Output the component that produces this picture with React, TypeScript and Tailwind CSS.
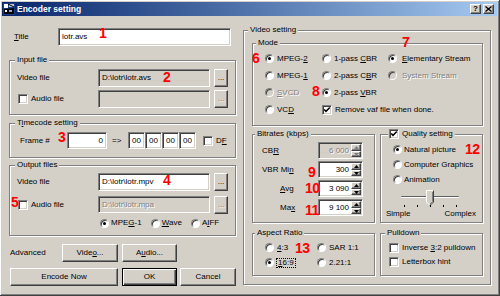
import React from "react";

const sunken =
  "border border-t-[#808080] border-l-[#808080] border-r-white border-b-white shadow-[inset_1px_1px_0_#404040,inset_-1px_-1px_0_#d4d0c8]";
const raised =
  "border border-t-white border-l-white border-r-[#404040] border-b-[#404040] shadow-[inset_-1px_-1px_0_#808080]";
const dis = "text-[#808080] [text-shadow:1px_1px_0_#fff]";

function U({ c }: { c: string }) {
  return <span className="underline decoration-1 underline-offset-[1px]">{c}</span>;
}

function Group({
  label,
  className = "",
  labelClass = "left-[5px]",
  children,
}: {
  label: React.ReactNode;
  className?: string;
  labelClass?: string;
  children?: React.ReactNode;
}) {
  return (
    <div
      className={`relative shrink-0 border border-[#808080] shadow-[inset_1px_1px_0_#fff,1px_1px_0_#fff] ${className}`}
    >
      <div
        className={`absolute -top-[6px] ${labelClass} px-[2px] bg-[#d4d0c8] leading-[10px] whitespace-nowrap`}
      >
        {label}
      </div>
      {children}
    </div>
  );
}

function Radio({ checked = false, disabled = false }: { checked?: boolean; disabled?: boolean }) {
  return (
    <span
      className={`relative inline-block shrink-0 w-[9px] h-[9px] rounded-full border border-t-[#808080] border-l-[#808080] border-r-white border-b-white shadow-[inset_1px_1px_0_#404040] ${
        disabled ? "bg-[#d4d0c8]" : "bg-white"
      }`}
    >
      {checked && (
        <span className="absolute left-[2px] top-[2px] w-[3px] h-[3px] rounded-full bg-black" />
      )}
    </span>
  );
}

function Check({ checked = false }: { checked?: boolean }) {
  return (
    <span className={`relative inline-block shrink-0 w-[10px] h-[10px] bg-white ${sunken}`}>
      {checked && (
        <svg className="absolute left-0 top-0" width="8" height="8" viewBox="0 0 8 8">
          <path d="M1.2 3.4 L3 5.3 L6.8 1.5" stroke="black" strokeWidth="1.5" fill="none" />
        </svg>
      )}
    </span>
  );
}

function Btn({
  children,
  className = "",
  def = false,
}: {
  children: React.ReactNode;
  className?: string;
  def?: boolean;
}) {
  return (
    <div
      className={`shrink-0 flex items-center justify-center h-[18px] ${
        def
          ? "border border-black shadow-[inset_1px_1px_0_#fff,inset_-1px_-1px_0_#404040,inset_-2px_-2px_0_#808080]"
          : raised
      } ${className}`}
    >
      {children}
    </div>
  );
}

function Field({
  children,
  className = "",
}: {
  children?: React.ReactNode;
  className?: string;
}) {
  return (
    <div className={`shrink-0 flex items-center pl-[3px] whitespace-nowrap ${sunken} ${className}`}>
      {children}
    </div>
  );
}

function Arrow({ up, color }: { up: boolean; color: string }) {
  return (
    <svg width="5" height="3" viewBox="0 0 5 3">
      <path d={up ? "M2.5 0 L5 3 L0 3Z" : "M0 0 L5 0 L2.5 3Z"} fill={color} />
    </svg>
  );
}

function Spin({ value, disabled = false }: { value: string; disabled?: boolean }) {
  const c = disabled ? "#808080" : "black";
  return (
    <div className={`shrink-0 flex w-[45px] h-[17px] ${sunken} ${disabled ? "bg-[#d4d0c8]" : "bg-white"}`}>
      <div className={`flex-1 text-right pr-[2px] leading-[15px] ${disabled ? dis : ""}`}>{value}</div>
      <div className="flex flex-col w-[10px] mt-[1px] mb-[1px] mr-[1px]">
        <div className={`h-[7px] bg-[#d4d0c8] flex items-center justify-center ${raised}`}>
          <Arrow up color={c} />
        </div>
        <div className={`h-[6px] bg-[#d4d0c8] flex items-center justify-center ${raised}`}>
          <Arrow up={false} color={c} />
        </div>
      </div>
    </div>
  );
}

function Opt({
  checked = false,
  disabled = false,
  children,
  gap = "ml-[3px]",
}: {
  checked?: boolean;
  disabled?: boolean;
  children: React.ReactNode;
  gap?: string;
}) {
  return (
    <div className="flex items-center whitespace-nowrap">
      <Radio checked={checked} disabled={disabled} />
      <span className={`${gap} ${disabled ? dis : ""}`}>{children}</span>
    </div>
  );
}

function TitleIcon() {
  return (
    <svg width="12" height="12" viewBox="0 0 12 12" className="ml-[1px] shrink-0">
      <rect x="0" y="0" width="12" height="12" fill="#1c3c8c" />
      <rect x="1" y="1" width="4" height="4" fill="#ffffff" />
      <rect x="6" y="1" width="5" height="3" fill="#c8c8c8" />
      <path d="M1 6 L11 5 L11 11 L1 11Z" fill="#000" />
      <rect x="2" y="7" width="2" height="2" fill="#fff" />
      <rect x="6" y="7" width="3" height="2" fill="#8fa8e0" />
      <path d="M5 1 L11 4" stroke="#000" strokeWidth="1" />
    </svg>
  );
}

function TBtn({ children }: { children: React.ReactNode }) {
  return (
    <div
      className={`w-[11px] h-[10px] bg-[#d4d0c8] flex items-center justify-center text-[8px] font-bold leading-none ${raised}`}
    >
      {children}
    </div>
  );
}

function Slider() {
  return (
    <svg width="90" height="21" viewBox="0 0 90 21" className="ml-[9px] block">
      <rect x="11" y="9" width="58" height="1" fill="#808080" />
      <rect x="11" y="10" width="58" height="1" fill="#ffffff" />
      <rect x="12" y="9.5" width="56" height="0.5" fill="#404040" />
      <path d="M36 3 H44 V15 L40 19 L36 15 Z" fill="#d4d0c8" />
      <path d="M36.5 15 V3.5 H43.5" stroke="#fff" strokeWidth="1" fill="none" />
      <path d="M43.5 3.5 V15 L40 18.5" stroke="#404040" strokeWidth="1" fill="none" />
      <path d="M36.5 15 L39.5 18" stroke="#fff" strokeWidth="1" fill="none" />
      <path d="M42.5 5 V14.6 L40 17" stroke="#808080" strokeWidth="1" fill="none" />
      {[14, 27, 40, 53, 66].map((x) => (
        <rect key={x} x={x} y="18" width="1" height="2" fill="#000" />
      ))}
    </svg>
  );
}

function Marks() {
  const m: [string, number, number][] = [
    ["1", 99, 26],
    ["2", 163, 70],
    ["3", 58, 130],
    ["4", 163, 173],
    ["5", 11, 195],
    ["6", 252, 51],
    ["7", 402, 35],
    ["8", 312, 84],
    ["9", 308, 165],
    ["10", 305, 181],
    ["11", 305, 203],
    ["12", 465, 142],
    ["13", 295, 241],
  ];
  return (
    <>
      {m.map(([t, x, y]) => (
        <div
          key={t}
          className="absolute text-[14px] leading-[14px] font-bold text-[#ff0000] tracking-[-0.5px]"
          style={{ left: x, top: y }}
        >
          {t}
        </div>
      ))}
    </>
  );
}

function LeftColumn() {
  return (
    <div className="w-[227px] shrink-0 flex flex-col">
      <div className="mt-[12px] h-[18px] flex items-center">
        <span className="pl-[5px] w-[49px]">
          <U c="T" />
          itle
        </span>
        <Field className="w-[173px] h-[18px] bg-white">lotr.avs</Field>
      </div>

      <Group label="Input file" className="mt-[14px] h-[55px]">
        <div className="pt-[8px] pl-[7px] flex flex-col gap-[3px]">
          <div className="flex items-center h-[18px]">
            <span className="w-[81px]">Video file</span>
            <Field className="w-[112px] h-[18px] bg-[#d4d0c8]">D:\lotr\lotr.avs</Field>
            <Btn className="ml-[4px] w-[14px] items-end pb-[3px]">...</Btn>
          </div>
          <div className="flex items-center h-[18px]">
            <span className="w-[81px] flex items-center">
              <span className="ml-[1px] flex">
                <Check />
              </span>
              <span className="ml-[3px]">Audio file</span>
            </span>
            <Field className="w-[112px] h-[18px] bg-[#d4d0c8]" />
            <Btn className={`ml-[4px] w-[14px] items-end pb-[3px] ${dis}`}>...</Btn>
          </div>
        </div>
      </Group>

      <Group label={<span>T<U c="i" />mecode setting</span>} className="mt-[8px] h-[35px]">
        <div className="mt-[8px] ml-[10px] flex items-center h-[17px]">
          <span className="w-[47px]">Frame #</span>
          <Field className="w-[40px] h-[17px] bg-white justify-end pr-[3px]">0</Field>
          <span className="ml-[5px] w-[16px]">=&gt;</span>
          {[0, 1, 2, 3].map((i) => (
            <Field key={i} className="w-[17px] h-[17px] bg-white pl-[2px]">
              00
            </Field>
          ))}
          <span className="ml-[7px] flex">
            <Check />
          </span>
          <span className="ml-[3px]">
            D<U c="F" />
          </span>
        </div>
      </Group>

      <Group label="Output files" className="mt-[7px] h-[71px]">
        <div className="pt-[7px] pl-[7px] flex flex-col">
          <div className="flex items-center h-[18px]">
            <span className="w-[81px]">Video file</span>
            <Field className="w-[112px] h-[18px] bg-white">D:\lotr\lotr.mpv</Field>
            <Btn className="ml-[4px] w-[14px] items-end pb-[3px]">...</Btn>
          </div>
          <div className="mt-[5px] flex items-center h-[17px]">
            <span className="w-[81px] flex items-center">
              <span className="ml-[1px] flex">
                <Check />
              </span>
              <span className="ml-[3px]">Audio file</span>
            </span>
            <Field className={`w-[112px] h-[17px] bg-[#d4d0c8] ${dis}`}>D:\lotr\lotr.mpa</Field>
            <Btn className={`ml-[4px] w-[14px] h-[17px] items-end pb-[3px] ${dis}`}>...</Btn>
          </div>
          <div className="mt-[4px] h-[12px] flex items-center">
            <div className="ml-[83px]">
              <Opt checked gap="ml-[2px]">
                MPE<U c="G" />-1
              </Opt>
            </div>
            <div className="ml-[9px]">
              <Opt gap="ml-[2px]">
                <U c="W" />ave
              </Opt>
            </div>
            <div className="ml-[9px]">
              <Opt gap="ml-[2px]">
                A<U c="I" />FF
              </Opt>
            </div>
          </div>
        </div>
      </Group>

      <div className="mt-[8px] h-[18px] flex items-center">
        <span className="ml-[1px] w-[52px]">Advanced</span>
        <Btn className="w-[56px]">
          Vide<U c="o" />...
        </Btn>
        <Btn className="ml-[4px] w-[55px]">
          A<U c="u" />dio...
        </Btn>
      </div>

      <div className="mt-[6px] h-[18px] flex items-center">
        <Btn className="ml-[1px] w-[108px]">Encode Now</Btn>
        <Btn def className="ml-[4px] w-[55px]">
          OK
        </Btn>
        <Btn className="ml-[3px] w-[56px]">Cancel</Btn>
      </div>
    </div>
  );
}

function RightColumn() {
  const row = "h-[17px] flex items-center";
  return (
    <div className="ml-[7px] w-[248px] shrink-0">
      <Group label="Video setting" className="mt-[14px] h-[255px] w-[248px]" labelClass="left-[4px]">
        <div className="pl-[8px] pt-[12px] flex flex-col">
          <Group label="Mode" className="w-[231px] h-[83px]" labelClass="left-[3px]">
            <div className="pt-[6px] pl-[12px] grid grid-cols-[57px_66px_1fr]">
              <div className={row}>
                <Opt checked>
                  MPEG-<U c="2" />
                </Opt>
              </div>
              <div className={row}>
                <Opt>
                  1-pass <U c="C" />BR
                </Opt>
              </div>
              <div className={row}>
                <Opt checked gap="ml-[5px]">
                  <U c="E" />lementary Stream
                </Opt>
              </div>

              <div className={row}>
                <Opt>
                  MPEG-<U c="1" />
                </Opt>
              </div>
              <div className={row}>
                <Opt>
                  2-pass C<U c="B" />R
                </Opt>
              </div>
              <div className={row}>
                <Opt disabled gap="ml-[5px]">
                  System Stream
                </Opt>
              </div>

              <div className={row}>
                <Opt disabled>
                  <U c="S" />VCD
                </Opt>
              </div>
              <div className={row}>
                <Opt checked>
                  2-pass <U c="V" />BR
                </Opt>
              </div>
              <div className={row} />

              <div className={row}>
                <Opt>
                  VC<U c="D" />
                </Opt>
              </div>
              <div className={`${row} col-span-2`}>
                <Check checked />
                <span className="ml-[3px]">Remove vaf file when done.</span>
              </div>
            </div>
          </Group>

          <div className="mt-[8px] flex">
            <Group label="Bitrates (kbps)" className="w-[123px] h-[89px]" labelClass="left-[2px]">
              <div className="pt-[7px] flex flex-col gap-[2px]">
                <div className={row}>
                  <span className="pl-[9px] w-[65px]">
                    CB<U c="R" />
                  </span>
                  <Spin value="6 000" disabled />
                </div>
                <div className={row}>
                  <span className="pl-[9px] w-[65px]">
                    VBR Mi<U c="n" />
                  </span>
                  <Spin value="300" />
                </div>
                <div className={row}>
                  <span className="pl-[27px] w-[65px]">
                    <U c="A" />vg
                  </span>
                  <Spin value="3 090" />
                </div>
                <div className={row}>
                  <span className="pl-[27px] w-[65px]">
                    Ma<U c="x" />
                  </span>
                  <Spin value="9 100" />
                </div>
              </div>
            </Group>

            <div className="relative shrink-0 ml-[5px] w-[103px] h-[89px] border border-[#808080] shadow-[inset_1px_1px_0_#fff,1px_1px_0_#fff]">
              <div className="absolute -top-[6px] left-[7px] px-[1px] h-[10px] bg-[#d4d0c8] flex items-center whitespace-nowrap">
                <Check checked />
                <span className="ml-[3px] pr-[1px]">Quality setting</span>
              </div>
              <div className="pt-[7px] pl-[12px] flex flex-col">
                <div className="h-[15px] flex items-center">
                  <Opt checked gap="ml-[2px]">
                    Natural picture
                  </Opt>
                </div>
                <div className="h-[15px] flex items-center">
                  <Opt gap="ml-[2px]">Computer Graphics</Opt>
                </div>
                <div className="h-[15px] flex items-center">
                  <Opt gap="ml-[2px]">Animation</Opt>
                </div>
              </div>
              <Slider />
              <div className="flex justify-between pl-[5px] pr-[6px] h-[11px] items-center">
                <span>Simple</span>
                <span>Complex</span>
              </div>
            </div>
          </div>

          <div className="mt-[10px] flex">
            <Group label="Aspect Ratio" className="w-[123px] h-[43px]" labelClass="left-[2px]">
              <div className="pt-[6px] pl-[12px] grid grid-cols-[52px_1fr]">
                <div className="h-[15px] flex items-center">
                  <Opt>
                    <U c="4" />:3
                  </Opt>
                </div>
                <div className="h-[15px] flex items-center">
                  <Opt>SAR 1:1</Opt>
                </div>
                <div className="h-[15px] flex items-center">
                  <Radio checked />
                  <span className="ml-[2px] px-[1px] border border-dotted border-black leading-[8px]">
                    <U c="1" />6:9
                  </span>
                </div>
                <div className="h-[15px] flex items-center">
                  <Opt>2.21:1</Opt>
                </div>
              </div>
            </Group>
            <Group label="Pulldown" className="ml-[5px] w-[103px] h-[43px]" labelClass="left-[4px]">
              <div className="pt-[7px] pl-[8px] flex flex-col">
                <div className="h-[14px] flex items-center whitespace-nowrap">
                  <Check />
                  <span className="ml-[3px]">
                    Inverse <U c="3" />:2 pulldown
                  </span>
                </div>
                <div className="h-[14px] flex items-center whitespace-nowrap">
                  <Check />
                  <span className="ml-[3px]">Letterbox hint</span>
                </div>
              </div>
            </Group>
          </div>
        </div>
      </Group>
    </div>
  );
}

export default function App() {
  return (
    <div className="relative w-[500px] h-[296px] overflow-hidden bg-[#d4d0c8] text-black text-[8px] leading-[10px] font-['Liberation_Sans',Arial,sans-serif] border-r border-b border-r-[#404040] border-b-[#404040] shadow-[inset_1px_1px_0_#fff,inset_-1px_-1px_0_#808080]">
      <div className="mx-[2px] mt-[2px] h-[14px] flex items-center bg-linear-to-r from-[#0a246a] to-[#a6caf0]">
        <TitleIcon />
        <span className="ml-[2px] text-white font-bold text-[8.5px] leading-[10px]">Encoder setting</span>
        <div className="ml-auto mr-[3px] flex gap-[2px]">
          <TBtn>?</TBtn>
          <TBtn>
            <svg width="7" height="6" viewBox="0 0 7 6">
              <path d="M0.5 0.5 L6.5 5.5 M6.5 0.5 L0.5 5.5" stroke="black" strokeWidth="1.3" />
            </svg>
          </TBtn>
        </div>
      </div>
      <div className="flex pl-[9px]">
        <LeftColumn />
        <RightColumn />
      </div>
      <Marks />
    </div>
  );
}
